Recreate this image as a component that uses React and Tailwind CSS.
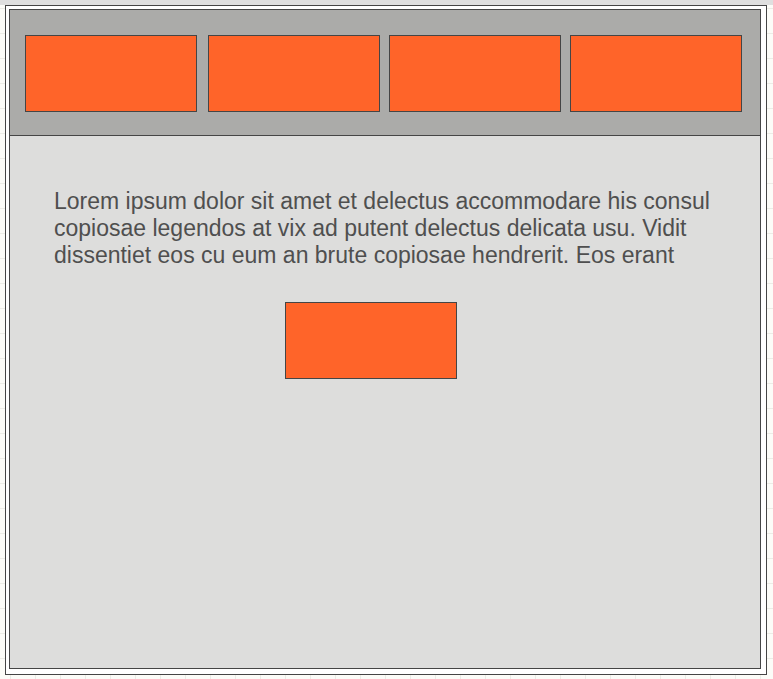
import React from 'react';

const boxMargins = ['ml-0', 'ml-[11px]', 'ml-[9px]', 'ml-[9px]'];

function OrangeBox({ className = '' }) {
  return <div className={`w-[172px] h-[77px] border border-[#454545] bg-[#ff6429] shrink-0 ${className}`} />;
}

export default function App() {
  return (
    <div
      className="w-[773px] h-[679px] overflow-hidden bg-[#fcfcf8] bg-[linear-gradient(to_right,#ececE6_1px,transparent_1px),linear-gradient(to_bottom,#ececE6_1px,transparent_1px)] bg-[size:25px_25px] bg-[position:10px_8px]"
      style={{ fontFamily: '"Liberation Sans", Arial, sans-serif' }}
    >
      <div className="h-[5px] bg-[#dfdfdf]" />

      <div className="ml-[5px] w-[762px] h-[670px] border border-[#454545] bg-white pt-[3px] pl-[3px]">
        <div className="w-[752px] h-[660px] border border-[#454545] bg-[#dddddc] flex flex-col">
          {/* header strip */}
          <div className="h-[126px] bg-[#ababa9] border-b border-[#454545] pt-[25px] pl-[15px] flex">
            {boxMargins.map((m, i) => (
              <OrangeBox key={i} className={m} />
            ))}
          </div>

          <div className="pt-[52px] pl-[44px]">
            <p className="text-[23px] leading-[27px] text-[#4f4f4f] whitespace-nowrap">
              Lorem ipsum dolor sit amet et delectus accommodare his consul
              <br />
              copiosae legendos at vix ad putent delectus delicata usu. Vidit
              <br />
              dissentiet eos cu eum an brute copiosae hendrerit. Eos erant
            </p>
          </div>

          <div className="mt-[33px] ml-[275px]">
            <OrangeBox />
          </div>
        </div>
      </div>
    </div>
  );
}
